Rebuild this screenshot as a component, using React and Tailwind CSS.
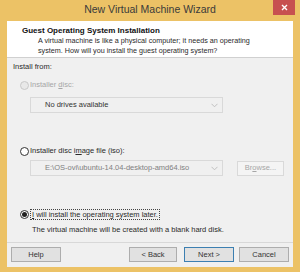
import React from "react";

const font = { fontFamily: '"Liberation Sans", Arial, sans-serif' };

const Radio = ({ checked, disabled }) => (
  <span
    className={`w-[9px] h-[9px] rounded-full border flex items-center justify-center shrink-0 ${
      disabled ? "border-[#c8c8c8] bg-[#e8e8e8]" : "border-[#333] bg-white"
    }`}
  >
    {checked && <span className="w-[5px] h-[5px] rounded-full bg-[#222]" />}
  </span>
);

const Combo = ({ text, dark }) => (
  <div className="w-[193px] h-[16px] border border-[#d9d9d9] bg-[#f0f0f0] flex items-center pl-[14px] pr-[4px]">
    <span className={`flex-1 text-[7.5px] ${dark ? "text-[#333]" : "text-[#808080]"}`}>{text}</span>
    <svg width="7" height="5" viewBox="0 0 7 5">
      <path d="M0.5 0.8 L3.5 3.8 L6.5 0.8" fill="none" stroke="#c0c0c0" strokeWidth="1" />
    </svg>
  </div>
);

const Btn = ({ label, def, w = "w-[50px]" }) => (
  <div
    className={`${w} h-[15px] flex items-center justify-center text-[7.5px] text-[#333] bg-[#e1e1e1] border ${
      def ? "border-[#3c7fb1]" : "border-[#adadad]"
    }`}
  >
    {label}
  </div>
);

export default function App() {
  return (
    <div style={font} className="w-[300px] h-[272px] bg-[#ecc266] flex flex-col px-[7px] pb-[5px] relative">
      {/* title bar */}
      <div className="h-[21px] flex items-center justify-center text-[10.5px] text-[#3a3a3a] pb-[1px]">
        New Virtual Machine Wizard
      </div>
      <div className="absolute right-[5px] top-0 w-[22px] h-[15px] bg-[#c75050] flex items-center justify-center">
        <svg width="7" height="7" viewBox="0 0 7 7">
          <path d="M1 1 L6 6 M6 1 L1 6" stroke="#fff" strokeWidth="1.4" />
        </svg>
      </div>

      <div className="flex-1 flex flex-col bg-[#f0f0f0]">
        {/* header */}
        <div className="h-[37px] bg-white border-b border-[#d0d0d0] pl-[15px] pt-[4px] text-[#111]">
          <div className="text-[8px] font-bold leading-[11px]">Guest Operating System Installation</div>
          <div className="pl-[16px] text-[7.2px] leading-[10px] text-[#2a2a2a]">
            A virtual machine is like a physical computer; it needs an operating
            <br />
            system. How will you install the guest operating system?
          </div>
        </div>

        {/* body */}
        <div className="flex-1 flex flex-col pl-[6px] text-[7.5px] text-[#2a2a2a]">
          <div className="mt-[4px] h-[10px] leading-[10px]">Install from:</div>

          <div className="mt-[8px] flex items-center gap-[1px] pl-[7px] h-[10px] text-[#a6a6a6]">
            <Radio disabled />
            <span>
              Installer <span className="underline">d</span>isc:
            </span>
          </div>
          <div className="mt-[7px] pl-[17px]">
            <Combo text="No drives available" dark />
          </div>

          <div className="mt-[33px] flex items-center gap-[1px] pl-[7px] h-[10px]">
            <Radio />
            <span>
              Installer disc i<span className="underline">m</span>age file (iso):
            </span>
          </div>
          <div className="mt-[4px] pl-[17px] flex items-center gap-[14px]">
            <Combo text="E:\OS-ovi\ubuntu-14.04-desktop-amd64.iso" />
            <div className="w-[47px] h-[15px] border border-[#d9d9d9] bg-[#f4f4f4] flex items-center justify-center text-[7.5px] text-[#a6a6a6]">
              Br<span className="underline">o</span>wse...
            </div>
          </div>

          <div className="mt-[33px] flex items-center gap-[1px] pl-[7px] h-[10px]">
            <Radio checked />
            <span className="border border-dotted border-[#444] px-[1px] leading-[9px]">
              <span className="underline">I</span> will install the operating system later.
            </span>
          </div>
          <div className="mt-[6px] pl-[19px] h-[10px] leading-[10px]">
            The virtual machine will be created with a blank hard disk.
          </div>
        </div>

        {/* footer */}
        <div className="border-t border-[#d8d8d8] h-[24px] flex items-center px-[4px] mb-[1px]">
          <Btn label="Help" />
          <div className="flex-1" />
          <div className="flex gap-[7px]">
            <Btn label="< Back" w="w-[48px]" />
            <Btn label="Next >" def />
          </div>
          <div className="ml-[5px]">
            <Btn label="Cancel" />
          </div>
        </div>
      </div>
    </div>
  );
}
